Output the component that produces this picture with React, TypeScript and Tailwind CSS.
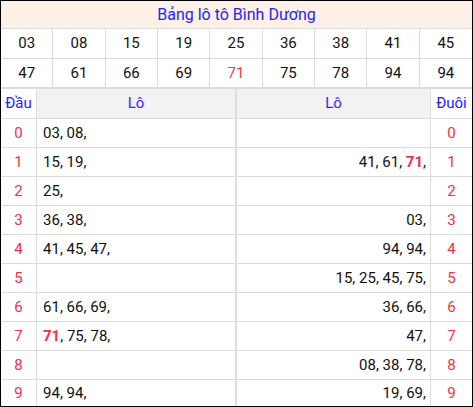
import React from "react";

const numbers = ["03", "08", "15", "19", "25", "36", "38", "41", "45", "47", "61", "66", "69", "71", "75", "78", "94", "94"];

type Row = { head: string[]; tail: string[] };

const rows: Row[] = [
  { head: ["03", "08"], tail: [] },
  { head: ["15", "19"], tail: ["41", "61", "71"] },
  { head: ["25"], tail: [] },
  { head: ["36", "38"], tail: ["03"] },
  { head: ["41", "45", "47"], tail: ["94", "94"] },
  { head: [], tail: ["15", "25", "45", "75"] },
  { head: ["61", "66", "69"], tail: ["36", "66"] },
  { head: ["71", "75", "78"], tail: ["47"] },
  { head: [], tail: ["08", "38", "78"] },
  { head: ["94", "94"], tail: ["19", "69"] },
];

const SPECIAL = "71";

function NumList({ items }: { items: string[] }) {
  return (
    <span>
      {items.map((n, i) => (
        <React.Fragment key={i}>
          {i > 0 ? " " : ""}
          {n === SPECIAL ? <b className="font-bold text-[#f0304a]">{n}</b> : n}
          ,
        </React.Fragment>
      ))}
    </span>
  );
}

export default function App() {
  return (
    <div
      className="w-[473px] bg-white border border-black text-[#111] overflow-hidden"
      style={{ fontFamily: "Roboto, 'Liberation Sans', sans-serif" }}
    >
      <div className="h-[28px] border-b border-[#dddddd] bg-[#fdf0e6] flex items-center justify-center text-[16px] text-[#1f1fff]">
        Bảng lô tô Bình Dương
      </div>

      <div className="grid grid-cols-9">
        {numbers.map((n, i) => (
          <div
            key={i}
            className={`h-[30px] flex items-center justify-center text-[15px] border-[#dddddd] ${
              i % 9 !== 8 ? "border-r" : ""
            } ${i < 9 ? "border-b" : "border-b-2"} ${n === SPECIAL ? "text-[#f0404a]" : ""}`}
          >
            {n}
          </div>
        ))}
      </div>

      <div className="grid grid-cols-[36px_200px_194px_1fr] text-[15px]">
        <div className="h-[30px] border-r border-b border-[#dddddd] flex items-center justify-center text-[#2222ff]">
          Đầu
        </div>
        <div className="h-[30px] border-r-2 border-b border-[#dddddd] bg-[#f2f2f2] flex items-center justify-center text-[#3b22ff]">
          Lô
        </div>
        <div className="h-[30px] border-r border-b border-[#dddddd] bg-[#f2f2f2] flex items-center justify-center text-[#3b22ff]">
          Lô
        </div>
        <div className="h-[30px] border-b border-[#dddddd] flex items-center justify-center text-[#2222ff]">
          Đuôi
        </div>

        {rows.map((r, i) => {
          const last = i === rows.length - 1;
          const h = last ? "h-[26px]" : "h-[29px] border-b";
          return (
            <React.Fragment key={i}>
              <div className={`${h} border-r border-[#dddddd] flex items-center justify-center text-[#f0304a]`}>
                {i}
              </div>
              <div className={`${h} border-r-2 border-[#dddddd] flex items-center pl-[6px] whitespace-nowrap`}>
                <NumList items={r.head} />
              </div>
              <div className={`${h} border-r border-[#dddddd] flex items-center justify-end pr-[4px] whitespace-nowrap`}>
                <NumList items={r.tail} />
              </div>
              <div className={`${h} border-[#dddddd] flex items-center justify-center text-[#f0304a]`}>
                {i}
              </div>
            </React.Fragment>
          );
        })}
      </div>
    </div>
  );
}
